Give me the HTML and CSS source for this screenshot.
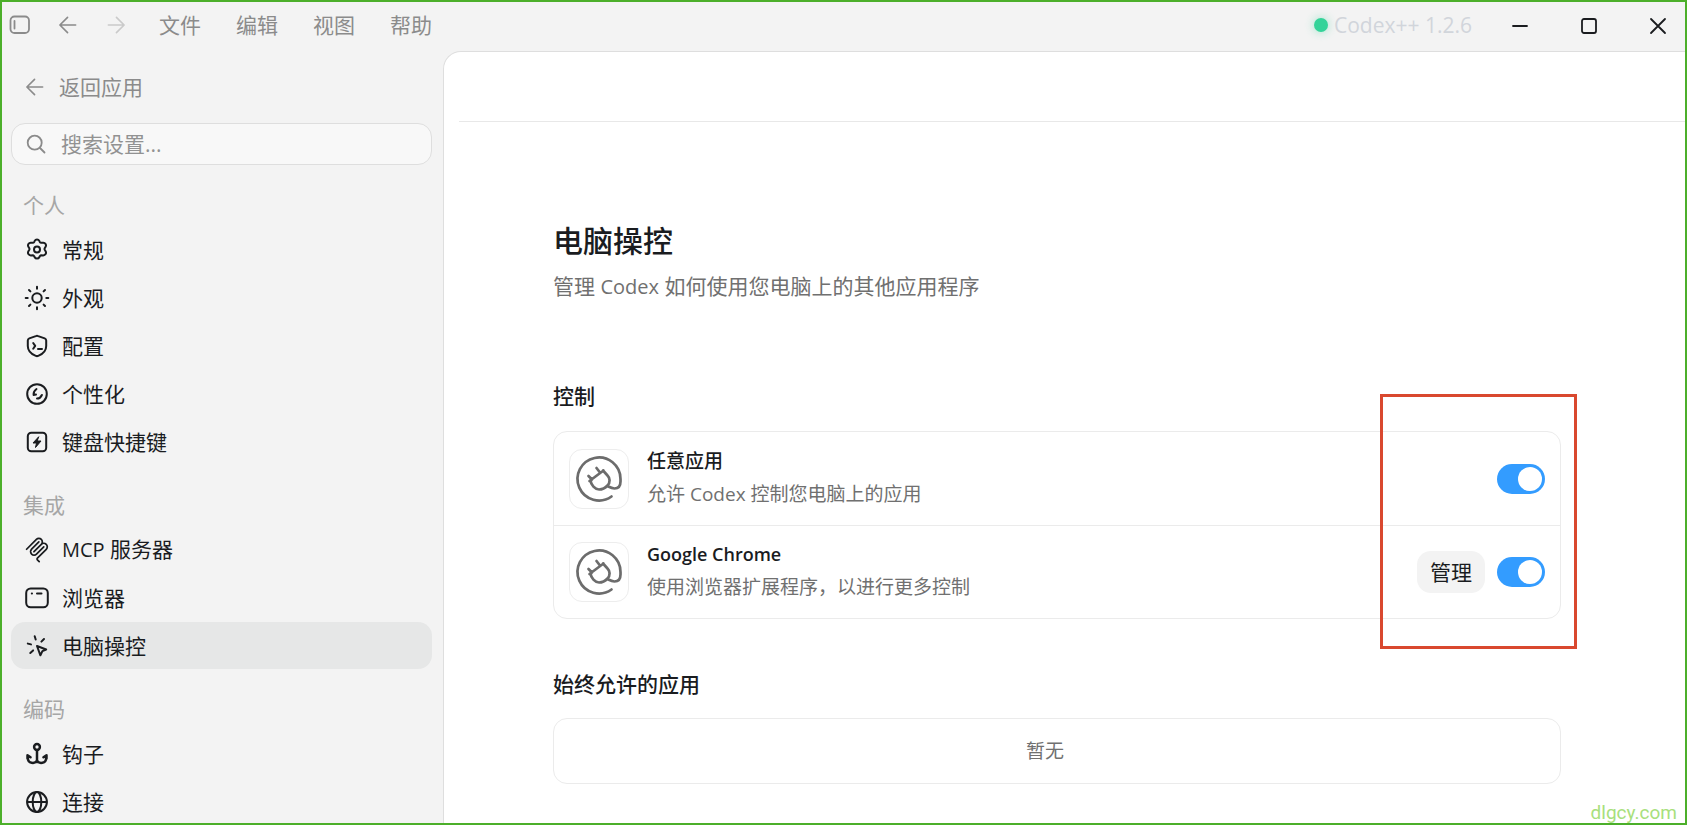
FILE: index.html
```html
<!DOCTYPE html>
<html lang="zh-CN">
<head>
<meta charset="utf-8">
<title>电脑操控</title>
<link rel="stylesheet" href="styles.css">
</head>
<body>
<svg class="defs" aria-hidden="true">
  <symbol id="arrow" viewBox="0 0 20 20"><path d="M18.500 10H1.500M9.500 1.500 1 10 9.500 18.500"/></symbol>
  <symbol id="plug" viewBox="0 0 58 58">
    <path d="M41.500 46.500A21.500 21.500 0 1 1 50.500 29V31.500C50.500 37 47.500 38.500 44.500 38.500C42 38.500 40.500 37.700 38.200 36.500"/>
    <path d="M19.500 31 33.500 20.500M20.500 30.500C21 35 25 39.500 29 39.500C33.500 39.500 35.500 37.700 37.500 35.500C40.500 32.500 40 28 37.500 25.500L33 20.500M26.500 18 30 22.500M18.500 26 22 29.500"/>
  </symbol>
</svg>
<div class="window">
  <header class="titlebar">
    <button class="tool" aria-label="切换侧边栏"><svg width="22" height="20" viewBox="0 0 22 20"><rect x="1.500" y="1.500" width="18.500" height="16.500" rx="4"/><path d="M5.500 6v7.500"/></svg></button>
    <button class="tool" aria-label="后退"><svg width="20" height="18"><use href="#arrow"/></svg></button>
    <button class="tool forward" aria-label="前进"><svg width="20" height="18"><use href="#arrow"/></svg></button>
    <nav class="menu"><button>文件</button><button>编辑</button><button>视图</button><button>帮助</button></nav>
    <div class="version"><span class="dot"></span>Codex++ 1.2.6</div>
    <div class="controls">
      <button aria-label="最小化"><svg width="18" height="18"><path d="M2 9h14"/></svg></button>
      <button aria-label="最大化"><svg width="18" height="18"><rect x="2" y="2" width="14" height="14" rx="2"/></svg></button>
      <button aria-label="关闭"><svg width="18" height="18"><path d="m2 2 14 14M16 2 2 16"/></svg></button>
    </div>
  </header>
  <div class="body">
    <aside class="sidebar">
      <button class="back"><svg width="20" height="18"><use href="#arrow"/></svg>返回应用</button>
      <label class="search">
        <svg width="20" height="20" viewBox="0 0 20 20"><circle cx="8.700" cy="8.700" r="7"/><path d="m14 14 4.500 4.500"/></svg>
        <input type="text" aria-label="搜索设置" placeholder="搜索设置...">
      </label>
      <h2>个人</h2>
      <nav class="group">
        <a href="#general"><svg viewBox="0 0 26 26"><path d="M10.700 3.900C11.200 2.900 11.900 2.600 13 2.600s1.800.3 2.300 1.300l.5 1c.4.700.9 1 1.700.9l1.500-.1c1.300-.1 2 .3 2.600 1.300s.6 1.700 0 2.700l-.9 1.500c-.3.600-.3 1 0 1.600l.9 1.500c.6 1 .6 1.800 0 2.800s-1.300 1.400-2.600 1.300l-1.500-.1c-.8 0-1.300.3-1.700.9l-.5 1c-.5 1-1.200 1.300-2.300 1.300s-1.800-.3-2.300-1.300l-.5-1c-.4-.6-.9-.9-1.700-.9l-1.500.1c-1.300.1-2-.3-2.600-1.300s-.6-1.800 0-2.800l.9-1.500c.3-.6.300-1 0-1.600l-.9-1.500c-.6-1-.6-1.700 0-2.700S5.700 5.600 7 5.700l1.500.1c.8.100 1.300-.2 1.700-.9z"/><circle cx="13" cy="12.500" r="3"/></svg>常规</a>
        <a href="#appearance"><svg viewBox="0 0 26 26"><circle cx="13" cy="13" r="4.700"/><path d="M13 1.700v2M13 22.300v2M1.700 13h2M22.300 13h2M5 5l1.400 1.400M19.600 19.600 21 21M21 5l-1.400 1.400M6.400 19.600 5 21"/></svg>外观</a>
        <a href="#config"><svg viewBox="0 0 26 26"><path d="M11.800 3.100c.8-.4 1.600-.4 2.400 0l6.500 2.300c1 .4 1.500 1 1.500 2V13c0 4.500-2.500 7.700-8 9.900-.8.300-1.600.3-2.400 0C6.300 20.700 3.800 17.500 3.800 13V7.400c0-1 .5-1.600 1.500-2z"/><path d="m9.200 10 2 2.900-2 2.900M14 16h4"/></svg>配置</a>
        <a href="#personal"><svg viewBox="0 0 26 26"><circle cx="13" cy="13" r="9.800"/><path d="M12.500 8C10.400 9.500 9.400 11.500 9.600 14l2.400-.4M13 17.600c2.200 0 3.900-1.400 4.900-3.600"/></svg>个性化</a>
        <a href="#keys"><svg viewBox="0 0 26 26"><rect x="3.800" y="3.800" width="18.400" height="18.400" rx="3.500"/><path class="solid" d="M14.500 8 9 14h3.500l-1 4.500L17 12h-3.500z"/></svg>键盘快捷键</a>
      </nav>
      <h2>集成</h2>
      <nav class="group">
        <a href="#mcp"><svg class="mcp" viewBox="0 0 180 180"><path d="M18 84.853 85.882 16.971C95.255 7.598 110.451 7.598 119.823 16.971C129.196 26.343 129.196 41.539 119.823 50.912L68.558 102.177M69.265 101.470 119.823 50.912C129.196 41.539 144.392 41.539 153.765 50.912L154.118 51.265C163.491 60.638 163.491 75.834 154.118 85.206L92.725 146.600C89.601 149.724 89.601 154.789 92.725 157.913L105.331 170.520M102.853 33.941 52.648 84.146C43.276 93.518 43.276 108.714 52.648 118.087C62.021 127.459 77.217 127.459 86.589 118.087L136.794 67.882"/></svg><span><span class="latin">MCP</span> 服务器</span></a>
        <a href="#browser"><svg viewBox="0 0 26 26"><rect x="2.200" y="3.500" width="21.600" height="18.800" rx="4.500"/><path d="M7.800 8.500h.2M13 8.500h4.500"/></svg>浏览器</a>
        <a href="#computer" class="active" aria-current="page"><svg viewBox="0 0 26 26"><path d="m13 13 9.200 3.500-3.800 1.600-2 4.200zM10.700 3.300l1 3.200M20 6l-2.600 2.600M3.800 10.600l3.200.8M6.300 20l2.800-2.600"/></svg>电脑操控</a>
      </nav>
      <h2>编码</h2>
      <nav class="group">
        <a href="#hooks"><svg class="heavy" viewBox="0 0 26 26"><circle cx="13" cy="6" r="2.900"/><path d="M13 9v12M3.800 17c0 5.700 7.200 6.200 9.200 2.500 2 3.700 9.200 3.200 9.200-2.500M3.500 17.500v-3.300l3 2M22.500 17.500v-3.300l-3 2"/></svg>钩子</a>
        <a href="#links"><svg viewBox="0 0 26 26"><circle cx="13" cy="13" r="9.900"/><ellipse cx="13" cy="13" rx="4.300" ry="9.900"/><path d="M3.500 13h19"/></svg>连接</a>
      </nav>
    </aside>
    <main class="main">
      <div class="topline"></div>
      <div class="content">
        <h1>电脑操控</h1>
        <p class="lead">管理 <span class="latin">Codex</span> 如何使用您电脑上的其他应用程序</p>
        <h3 class="first">控制</h3>
        <section class="card">
          <div class="row">
            <span class="app"><svg><use href="#plug"/></svg></span>
            <div class="info"><label for="any">任意应用</label><p>允许 <span class="latin">Codex</span> 控制您电脑上的应用</p></div>
            <input class="toggle" type="checkbox" id="any" checked>
          </div>
          <div class="row">
            <span class="app"><svg><use href="#plug"/></svg></span>
            <div class="info"><label for="chrome"><span class="latin">Google Chrome</span></label><p>使用浏览器扩展程序，以进行更多控制</p></div>
            <button class="manage">管理</button>
            <input class="toggle" type="checkbox" id="chrome" checked>
          </div>
          <div class="highlight"></div>
        </section>
        <h3 class="second">始终允许的应用</h3>
        <section class="card empty">暂无</section>
      </div>
    </main>
  </div>
  <div class="watermark">dlgcy.com</div>
</div>
</body>
</html>
```
FILE: styles.css
```css
* { box-sizing: border-box; }
body {
  margin: 0;
  font: 21px/30px "Open Sans", "Noto Sans CJK SC", sans-serif;
  color: #1a1c1f;
}
h1, h2, h3, p { margin: 0; }
button, input { font: inherit; color: inherit; }
button { border: 0; padding: 0; background: none; }
a { color: inherit; text-decoration: none; }
svg {
  flex: none;
  fill: none;
  stroke: currentColor;
  stroke-width: 2;
  stroke-linecap: round;
  stroke-linejoin: round;
}
.defs { position: absolute; width: 0; height: 0; }
.latin { font-size: 20px; }

.window {
  position: relative;
  display: flex;
  flex-direction: column;
  height: 100vh;
  border: 2px solid #4caf2a;
  background: #f3f3f3;
  overflow: hidden;
}

.titlebar {
  display: flex;
  align-items: center;
  flex: none;
  height: 49px;
  padding: 0 0 3px 7px;
  color: #8b8b8b;
}
.titlebar svg { display: block; stroke-width: 1.8; }
.tool { width: 22px; margin-right: 26px; }
.tool svg { margin: 0 auto; }
.tool.forward { margin-right: 32px; color: #cacaca; }
.forward svg { transform: scaleX(-1); }
.menu { display: flex; gap: 35px; }
.version {
  display: flex;
  align-items: center;
  gap: 6px;
  margin-left: auto;
  color: #d1d5db;
}
.dot {
  width: 14px;
  height: 14px;
  border-radius: 50%;
  background: #34d399;
  box-shadow: 0 0 10px #34d39973;
}
.controls { display: flex; gap: 51px; margin: 2px 18px 0 39px; color: #1a1c1f; }

.body { display: flex; flex: 1; min-height: 0; }
.sidebar {
  flex: none;
  width: 441px;
  padding: 12px 11px 0 9px;
  overflow: hidden;
}
.back {
  display: flex;
  align-items: center;
  gap: 14px;
  height: 48px;
  padding-left: 14px;
  color: #8b8b8b;
}
.back svg { stroke-width: 1.8; }
.search {
  display: flex;
  align-items: center;
  gap: 15px;
  height: 42px;
  margin: 12px 0 19px;
  padding: 0 14px;
  border: 1px solid #dedede;
  border-radius: 14px;
  background: #f8f8f8;
  color: #8b8b8b;
}
.search svg { stroke-width: 1.8; }
.search input {
  flex: 1;
  min-width: 0;
  padding: 0;
  border: 0;
  outline: 0;
  background: none;
}
.search input::placeholder { color: #929292; opacity: 1; }
.sidebar h2 {
  padding-left: 12px;
  font-size: 21px;
  font-weight: 400;
  line-height: 42px;
  color: #a6a6a6;
}
.group { display: grid; gap: 1px; margin-bottom: 19px; }
.group a {
  display: flex;
  align-items: center;
  gap: 12px;
  height: 47px;
  padding-left: 13px;
  border-radius: 14px;
}
.group svg { width: 26px; height: 26px; }
.group .mcp { stroke-width: 12; }
.group .heavy { stroke-width: 2.500; }
.group .solid { fill: currentColor; stroke-width: 1; }
.group .active { background: #e6e7e7; }

.main {
  flex: 1;
  min-width: 0;
  border: solid #dedede;
  border-width: 1px 0 0 1px;
  border-radius: 18px 0 0 0;
  background: #fff;
  overflow: hidden;
}
.topline { height: 70px; margin-left: 15px; border-bottom: 1px solid #e8e8e8; }
.content { padding: 99px 124px 0 109px; }
h1 { font-size: 30px; font-weight: 500; line-height: 40px; }
.lead { margin-top: 10px; color: #707070; }
h3 { font-size: 21px; font-weight: 500; }
.first { margin: 79px 0 20px; }
.second { margin: 50px 0 19px; }
.card {
  position: relative;
  border: 1px solid #ebebeb;
  border-radius: 14px;
  font-size: 19px;
}
.row {
  display: flex;
  align-items: center;
  gap: 12px;
  height: 93px;
  padding: 0 15px;
}
.row + .row { border-top: 1px solid #ebebeb; }
.app {
  display: grid;
  width: 60px;
  height: 60px;
  border: 1px solid #ededed;
  border-radius: 13px;
  color: #6c6c6c;
}
.app svg { width: 58px; height: 58px; stroke-width: 2.700; }
.info { flex: 1; min-width: 0; padding: 0 0 2px 6px; line-height: 33px; }
.info label { display: block; font-weight: 500; }
.info label .latin { font-size: 18px; font-weight: 600; }
.info p { color: #707070; }
.info p .latin { font-size: 19px; }
.manage {
  width: 68px;
  height: 42px;
  border-radius: 14px;
  background: #f3f3f3;
  font-size: 21px;
}
.toggle {
  display: flex;
  appearance: none;
  flex: none;
  width: 48px;
  height: 30px;
  margin: 0;
  padding: 3px;
  border-radius: 15px;
  background: #339cff;
}
.toggle::before {
  content: "";
  width: 24px;
  height: 24px;
  margin-left: auto;
  border-radius: 50%;
  background: #fff;
}
.toggle:not(:checked) { background: #d0d0d0; }
.toggle:not(:checked)::before { margin-left: 0; }
.highlight {
  position: absolute;
  top: -38px;
  right: -17px;
  bottom: -31px;
  width: 197px;
  border: 3px solid #d9482f;
  pointer-events: none;
}
.empty {
  padding: 17px 24px 17px 0;
  text-align: center;
  color: #707070;
}
.watermark {
  position: absolute;
  right: 8px;
  bottom: 0;
  font: 19px/20px Roboto, sans-serif;
  color: #a8e07c;
}
```
